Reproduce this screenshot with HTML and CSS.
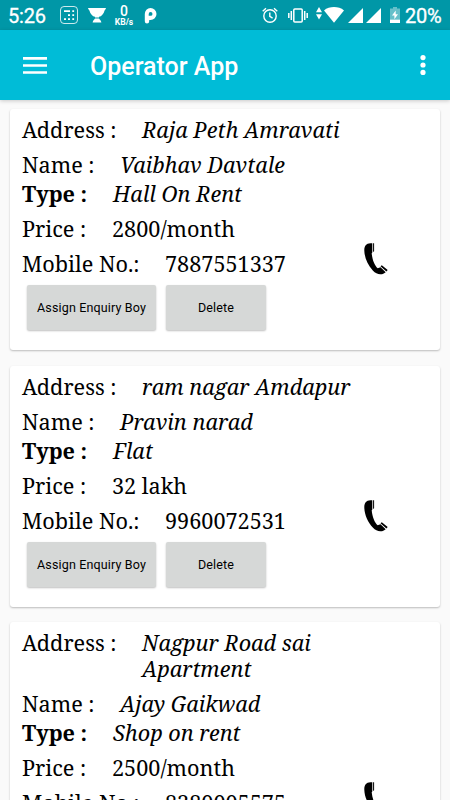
FILE: index.html
```
<!DOCTYPE html>
<html lang="en">
<head>
    <meta charset="UTF-8">
    <title>Operator App</title>
    <link rel="stylesheet" href="styles.css">
</head>
<body>
    <div class="status-bar">
        <span class="time">5:26</span>
        <svg class="icon-calc" width="18" height="18" viewBox="0 0 18 18" fill="#fff">
            <rect x=".5" y=".5" width="17" height="17" rx="3.5" fill="none" stroke="#fff" stroke-opacity=".8"/>
            <path d="M4 4.3h6v1.6H4zM12.3 4.3h1.8v1.8h-1.8zM8 8.3h2v1.8H8zM12.3 8.3h1.8v1.8h-1.8zM4 12.2h2V14H4zM8 12.2h2V14H8zM12.3 12.2h1.8V14h-1.8z"/>
        </svg>
        <svg class="icon-cup" width="18" height="15" viewBox="0 0 18 15" fill="#fff">
            <path d="M0 0h18c-.2 1.4-1 1.6-1.4 2.4C15.600 6 13.500 8.200 11 8.800V9.500H7v-.7C4.500 8.200 2.400 6 1.400 2.400 1 1.600.2 1.400 0 0zM7 10.500h4c.5 1 2 1.500 2.400 4H4.600C5 12 6.500 11.500 7 10.500z"/>
        </svg>
        <span class="speed"><b>0</b><small>KB/s</small></span>
        <svg class="icon-p" width="13" height="16" viewBox="0 0 13 16" fill="#fff" fill-rule="evenodd">
            <path d="M6.500 0a6 6 0 0 1 0 12H5.200v1.300a2.200 2.200 0 0 1-4.400 0V6A6 6 0 0 1 6.500 0zM6.600 4a1.900 1.900 0 0 0-1.900 1.900v1.900h1.900a1.900 1.900 0 0 0 0-3.800z"/>
        </svg>

        <svg class="icon-alarm" width="16" height="17" viewBox="0 0 16 17" fill="none" stroke="#fff" stroke-width="1.400">
            <circle cx="8" cy="9" r="6.200"/>
            <path d="M7.800 5.500V9.400l2.800 1.700M.7 4.200L4 1.300M15.300 4.200L12 1.300"/>
        </svg>
        <svg class="icon-vibrate" width="20" height="15" viewBox="0 0 20 15" fill="none" stroke="#fff" stroke-width="1.500">
            <rect x="5.800" y="1" width="8.400" height="13" rx="1"/>
            <path d="M.8 5v5M3.300 3v9M16.700 3v9M19.200 5v5"/>
        </svg>
        <svg class="icon-data" width="6" height="13" viewBox="0 0 6 13" fill="#fff">
            <path d="M0 5.300L3 0l3 5.300zM0 7.300h6l-3 5.300z"/>
        </svg>
        <svg class="icon-wifi" width="20" height="16" viewBox="0 0 20 16" fill="#fff">
            <path d="M0 3.400C5.500-1 14.500-1 20 3.400L10 15.700z"/>
        </svg>
        <svg class="icon-signal" width="15" height="15" viewBox="0 0 15 15" fill="#fff"><path d="M15 0v15H0z"/></svg>
        <svg class="icon-signal" width="15" height="15" viewBox="0 0 15 15" fill="#fff"><path d="M15 0v15H0z"/></svg>
        <svg class="icon-battery" width="10" height="16" viewBox="0 0 10 16" fill="#fff">
            <path d="M3 0h4v1.600h3V12.500H0V1.600h3z" opacity=".4"/>
            <path d="M0 12.500h10V16H0zM5.700 3.500v3.800h2.300l-3.600 4.900V8.500H2z"/>
        </svg>
        <span class="percent">20%</span>
    </div>

    <div class="toolbar">
        <svg class="menu" width="24" height="17" viewBox="0 0 24 17" fill="#fff">
            <path d="M0 0h24v2.700H0zM0 7.200h24v2.600H0zM0 14.200h24v2.600H0z"/>
        </svg>
        <h1>Operator App</h1>
        <svg class="more" width="6" height="20" viewBox="0 0 6 20" fill="#fff">
            <circle cx="3" cy="2.600" r="2.600"/>
            <circle cx="3" cy="10" r="2.600"/>
            <circle cx="3" cy="17.400" r="2.600"/>
        </svg>
    </div>

    <div class="list">
        <div class="card">
            <div class="row"><span class="label address">Address :</span><span class="value italic">Raja Peth Amravati</span></div>
            <div class="row name-row"><span class="label name">Name :</span><span class="value italic">Vaibhav Davtale</span></div>
            <div class="row"><span class="label type">Type :</span><span class="value italic">Hall On Rent</span></div>
            <div class="row"><span class="label price">Price :</span><span class="value">2800/month</span></div>
            <div class="row mobile-row"><span class="label mobile">Mobile No.:</span><span class="value number">7887551337</span>
                <svg class="phone" width="24" height="32" viewBox="0 0 24 32">
                    <path d="M6.500.3C2 .6.300 3 .3 7.500c.2 7.500 3.500 14.500 8.500 20 3.500 3.800 7.500 4.700 11 2.900l1.900-1.100-5.200-5-2.800 1C10.700 22.500 8.300 17 7.700 10.200l.6-.6V.3z"/>
                    <path d="M9.100.3h1v7.900l-1 .8zM16.500 23.300l1.300-1.100 5.900 4.700-1.300 1.500z"/>
                </svg>
            </div>
            <div class="buttons"><button class="assign">Assign Enquiry Boy</button><button class="delete">Delete</button></div>
        </div>

        <div class="card">
            <div class="row"><span class="label address">Address :</span><span class="value italic">ram nagar Amdapur</span></div>
            <div class="row name-row"><span class="label name">Name :</span><span class="value italic">Pravin narad</span></div>
            <div class="row"><span class="label type">Type :</span><span class="value italic">Flat</span></div>
            <div class="row"><span class="label price">Price :</span><span class="value">32 lakh</span></div>
            <div class="row mobile-row"><span class="label mobile">Mobile No.:</span><span class="value number">9960072531</span>
                <svg class="phone" width="24" height="32" viewBox="0 0 24 32">
                    <path d="M6.500.3C2 .6.300 3 .3 7.500c.2 7.500 3.500 14.500 8.500 20 3.500 3.800 7.500 4.700 11 2.900l1.900-1.100-5.200-5-2.800 1C10.700 22.500 8.300 17 7.700 10.200l.6-.6V.3z"/>
                    <path d="M9.100.3h1v7.900l-1 .8zM16.500 23.300l1.300-1.100 5.900 4.700-1.300 1.500z"/>
                </svg>
            </div>
            <div class="buttons"><button class="assign">Assign Enquiry Boy</button><button class="delete">Delete</button></div>
        </div>

        <div class="card">
            <div class="row"><span class="label address">Address :</span><span class="value italic">Nagpur Road sai Apartment</span></div>
            <div class="row name-row"><span class="label name">Name :</span><span class="value italic">Ajay Gaikwad</span></div>
            <div class="row"><span class="label type">Type :</span><span class="value italic">Shop on rent</span></div>
            <div class="row"><span class="label price">Price :</span><span class="value">2500/month</span></div>
            <div class="row mobile-row"><span class="label mobile">Mobile No.:</span><span class="value number">8380005575</span>
                <svg class="phone" width="24" height="32" viewBox="0 0 24 32">
                    <path d="M6.500.3C2 .6.300 3 .3 7.500c.2 7.500 3.500 14.500 8.500 20 3.500 3.800 7.500 4.700 11 2.900l1.900-1.100-5.200-5-2.800 1C10.700 22.500 8.300 17 7.700 10.200l.6-.6V.3z"/>
                    <path d="M9.100.3h1v7.900l-1 .8zM16.500 23.300l1.300-1.100 5.900 4.700-1.300 1.500z"/>
                </svg>
            </div>
        </div>
    </div>
</body>
</html>
```
FILE: styles.css
```
* {
    box-sizing: border-box;
}
body {
    display: flex;
    flex-direction: column;
    margin: 0;
    height: 800px;
    overflow: hidden;
    background-color: #fafafa;
    font-family: Roboto, sans-serif;
}
svg {
    display: block;
    flex: none;
}

/* status bar */
.status-bar {
    display: flex;
    flex: none;
    align-items: flex-start;
    height: 30px;
    padding-left: 8px;
    background-color: #0097a7;
    color: #fff;
}
.time, .percent {
    font-size: 20px;
    line-height: 32px;
    letter-spacing: -0.2px;
    white-space: nowrap;
    -webkit-text-stroke: 0.3px #fff;
}
.time {
    width: 52px;
}
.percent {
    margin-left: 5px;
}
.icon-calc {
    margin-top: 6px;
}
.icon-cup {
    margin: 8px 0 0 10px;
}
.speed {
    width: 20px;
    margin: 4px 0 0 8px;
    text-align: center;
}
.speed b, .speed small {
    display: block;
    font-size: 14px;
    font-weight: 500;
    line-height: 14px;
}
.speed small {
    font-size: 8.5px;
    font-weight: 700;
    line-height: 8px;
}
.icon-p {
    margin: 8px 0 0 10px;
}
.icon-alarm {
    margin: 7px 0 0 105px;
}
.icon-vibrate {
    margin: 8px 0 0 10px;
}
.icon-data {
    margin: 7px 0 0 8px;
}
.icon-wifi {
    margin: 7px 0 0 2px;
}
.icon-signal {
    margin: 8px 0 0 3.5px;
}
.icon-battery {
    margin: 7px 0 0 9px;
}

/* toolbar */
.toolbar {
    display: flex;
    flex: none;
    align-items: center;
    height: 70px;
    padding: 0 24.5px 0 23px;
    background-color: #00bcd7;
    box-shadow: 0 1px 4px rgba(0,0,0,0.2);
}
.toolbar h1 {
    margin: 2px 0 0 43px;
    color: #fff;
    font-size: 25px;
    font-weight: 500;
}
.toolbar .more {
    margin-left: auto;
}

/* cards */
.list {
    display: flex;
    flex: 1;
    flex-direction: column;
    gap: 15.5px;
    min-height: 0;
    padding: 9px 10px 0;
    overflow: hidden;
}
.card {
    flex: none;
    padding: 8px 12px 20px;
    background-color: #fff;
    border-radius: 3px;
    box-shadow: 0 1px 2px rgba(0,0,0,0.25);
}
.row {
    display: flex;
    margin-bottom: 9px;
    font-family: "Noto Serif", "Liberation Serif", serif;
    font-size: 21.65px;
    line-height: 26px;
    color: #000;
}
.name-row {
    margin-bottom: 3px;
}
.mobile-row {
    margin-bottom: 8px;
}
.label {
    flex: none;
}
.address {
    width: 120px;
}
.name {
    width: 98px;
}
.type {
    width: 91px;
    font-weight: bold;
}
.price {
    width: 90px;
}
.mobile {
    width: 143px;
}
.value {
    max-width: 215px;
}
.italic {
    font-style: italic;
}
.number {
    width: 199px;
}
.phone {
    margin: -8px 0;
}
.buttons {
    display: flex;
    gap: 10px;
    margin-left: 5px;
}
button {
    height: 45px;
    padding: 0;
    border: none;
    border-radius: 2px;
    background-color: #d6d8d7;
    box-shadow: 0 1px 2px rgba(0,0,0,0.25);
    font-family: Roboto, sans-serif;
    font-size: 12.5px;
    font-weight: 400;
    letter-spacing: 0.15px;
    color: #000;
}
.assign {
    width: 129px;
}
.delete {
    width: 100px;
}
```
